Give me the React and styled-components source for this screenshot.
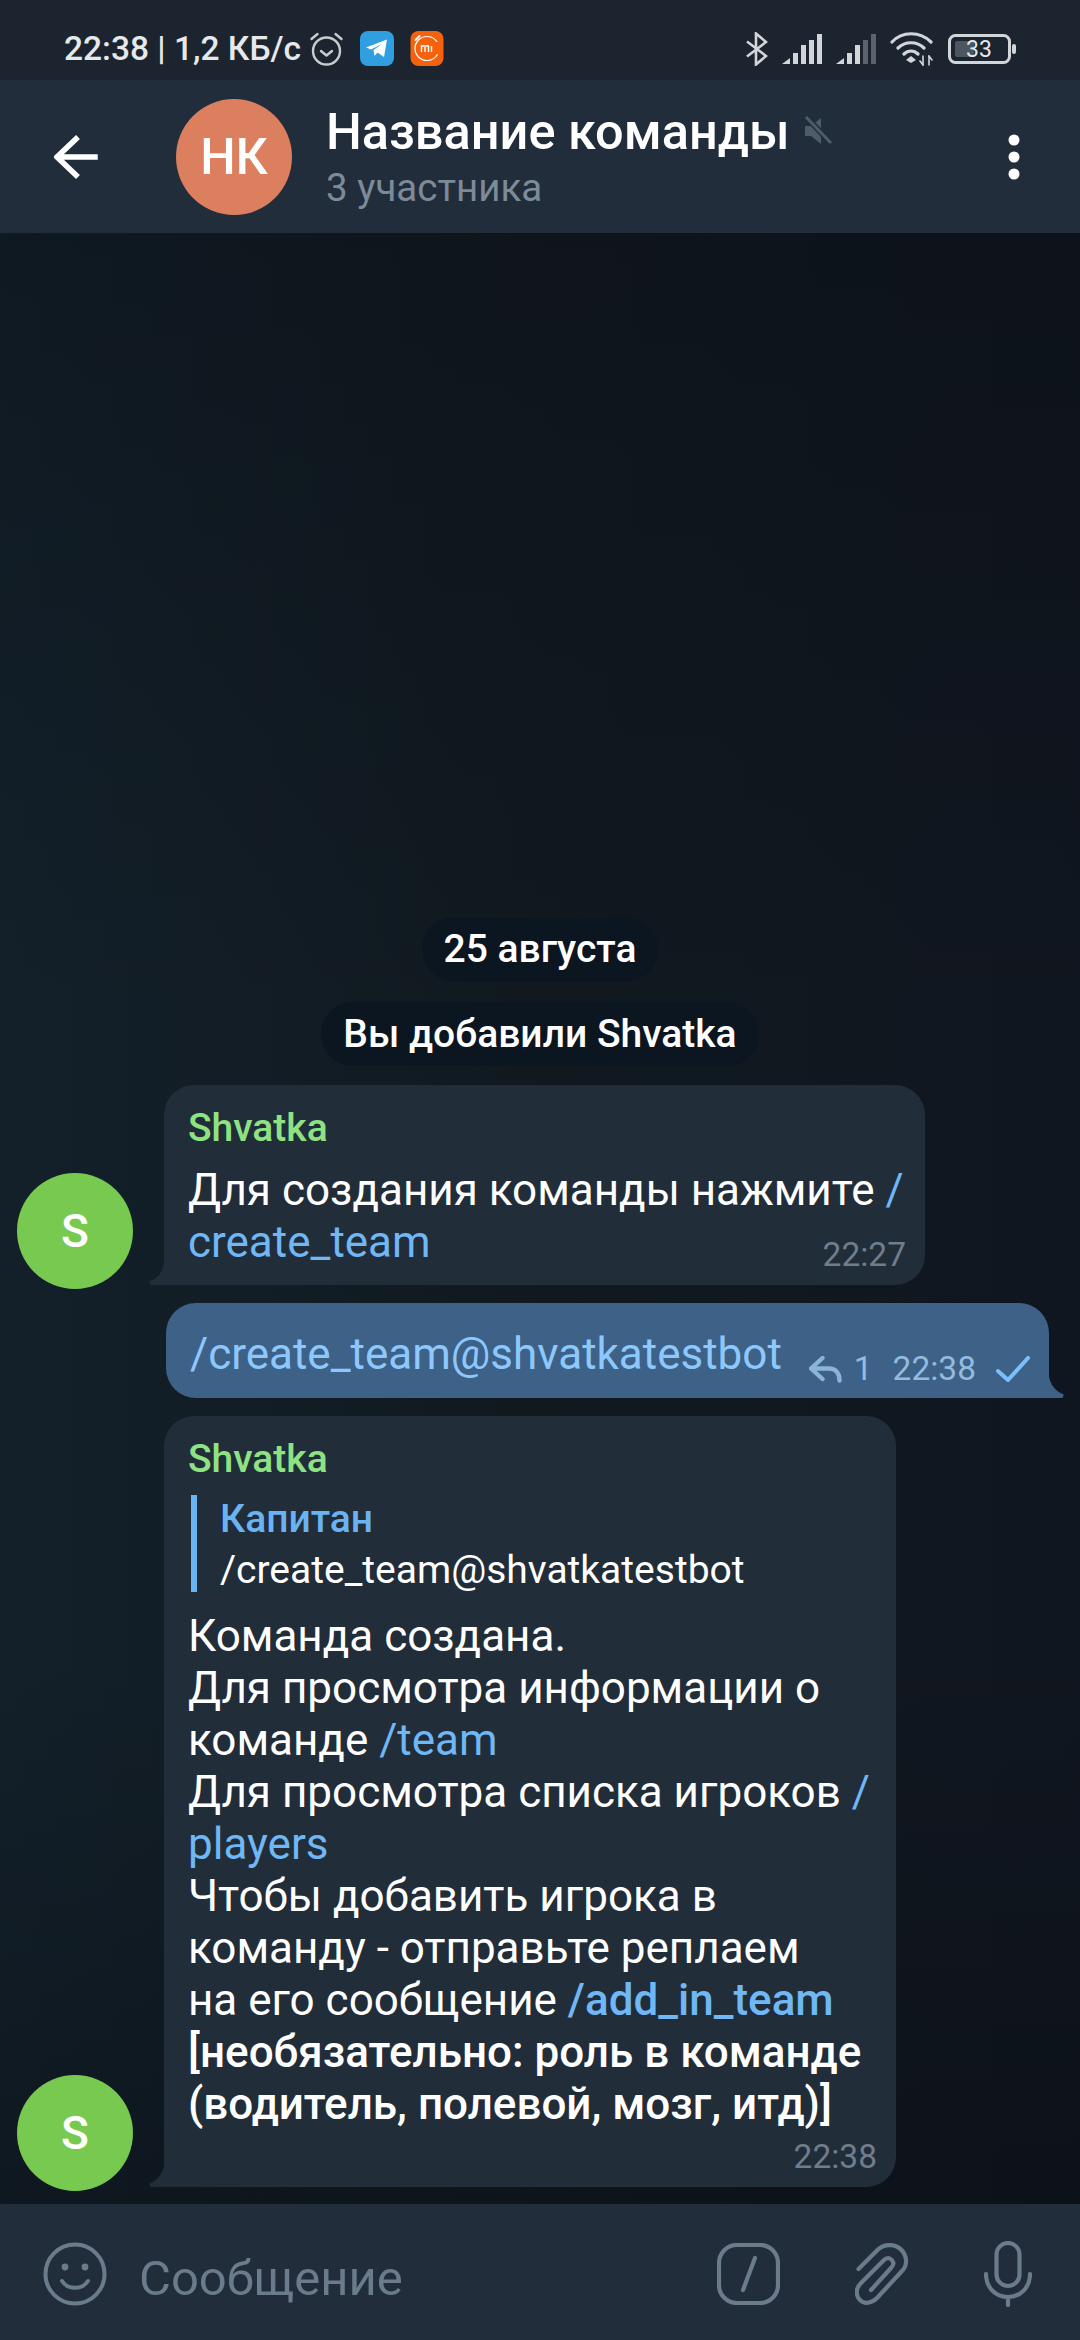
import React from 'react';
import styled, { createGlobalStyle } from 'styled-components';

const Global = createGlobalStyle`
  html, body {
    margin: 0;
    padding: 0;
    background: #0f1822;
  }
  * {
    box-sizing: border-box;
  }
`;

const Page = styled.div`
  width: 1080px;
  height: 2340px;
  display: flex;
  flex-direction: column;
  overflow: hidden;
  font-family: Roboto, 'Liberation Sans', sans-serif;
  color: #fff;
`;

const StatusBar = styled.div`
  height: 80px;
  flex: none;
  display: flex;
  align-items: center;
  justify-content: space-between;
  padding: 17px 64px 0 64px;
  background: #1b242f;
`;

const StatusGroup = styled.div`
  display: flex;
  align-items: center;
  gap: ${p => p.$gap || 16}px;
`;

const StatusText = styled.span`
  font-size: 33.5px;
  font-weight: 500;
  color: #e6e8ea;
  white-space: nowrap;
  margin-right: -8px;
`;

const Header = styled.header`
  height: 153px;
  flex: none;
  display: flex;
  align-items: center;
  padding: 0 60px 0 54px;
  background: #212d3b;
`;

const Avatar = styled.div`
  flex: none;
  width: ${p => p.$size}px;
  height: ${p => p.$size}px;
  border-radius: 50%;
  display: flex;
  align-items: center;
  justify-content: center;
  font-weight: 500;
  font-size: ${p => p.$font}px;
  color: #fff;
  background: ${p => p.$color};
`;

const HeaderAvatar = styled(Avatar)`
  margin-left: 78px;
`;

const TitleBlock = styled.div`
  margin-left: 34px;
  flex: 1;
  display: flex;
  flex-direction: column;
  gap: 4px;
`;

const TitleRow = styled.div`
  display: flex;
  align-items: flex-start;
  gap: 14px;
`;

const Title = styled.div`
  font-size: 50.5px;
  font-weight: 500;
  line-height: 58px;
`;

const Subtitle = styled.div`
  font-size: 38.5px;
  line-height: 46px;
  color: #7d8b99;
`;

const MuteSvg = styled.svg`
  margin-top: 13px;
`;

const Chat = styled.main`
  flex: 1;
  display: flex;
  flex-direction: column;
  justify-content: flex-end;
  padding: 0 0 17px;
  background:
    linear-gradient(180deg, rgba(8, 12, 18, 0.35) 0%, rgba(8, 12, 18, 0) 40%, rgba(8, 12, 18, 0) 72%, rgba(8, 12, 18, 0.4) 100%),
    linear-gradient(90deg, #13202a 0%, #11191f 50%, #10161f 100%);
`;

const ServiceChip = styled.div`
  align-self: center;
  height: 64px;
  display: flex;
  align-items: center;
  padding: 0 22px;
  margin-bottom: ${p => p.$after}px;
  border-radius: 32px;
  font-size: 39px;
  font-weight: 500;
  background: #0c1620;
  color: #fff;
`;

const Row = styled.div`
  display: flex;
  align-items: flex-end;
  margin-bottom: ${p => p.$after || 0}px;
`;

const RowAvatar = styled(Avatar)`
  margin: 0 31px -4px 17px;
`;

const Bubble = styled.div`
  position: relative;
  width: ${p => p.$width}px;
  padding: 21px 24px ${p => p.$bottom}px;
  border-radius: 30px 30px 30px 0;
  background: #222d3a;
  font-size: 44px;
  line-height: 52px;
  white-space: nowrap;
`;

const OutRow = styled.div`
  display: flex;
  justify-content: flex-end;
  padding-right: 31px;
  margin-bottom: 18px;
`;

const OutBubble = styled.div`
  position: relative;
  width: 883px;
  height: 95px;
  display: flex;
  justify-content: space-between;
  padding: 25px 19px 0 24px;
  border-radius: 30px 30px 0 30px;
  background: #3e6188;
  font-size: 44px;
  line-height: 52px;
  white-space: nowrap;
`;

const Tail = styled.svg`
  position: absolute;
  bottom: 0;
  width: 16px;
  height: 30px;
  ${p => (p.$side === 'right' ? 'right: -15px;' : 'left: -15px;')}
  fill: ${p => p.$color};
`;

const Sender = styled.div`
  color: #8fe282;
  font-size: 39px;
  font-weight: 500;
  line-height: 44px;
  margin-bottom: 14px;
`;

const Command = styled.span`
  color: ${p => (p.$out ? '#8dc8fd' : '#6fb7f5')};
  font-weight: ${p => (p.$bold ? 500 : 400)};
`;

const Strong = styled.div`
  font-weight: 500;
`;

const Time = styled.span`
  position: absolute;
  right: 19px;
  bottom: 10px;
  font-size: 33.5px;
  line-height: 40px;
  color: #6f7e8d;
`;

const OutMeta = styled.div`
  display: flex;
  align-items: center;
  align-self: flex-start;
  gap: 20px;
  margin-top: 21px;
  font-size: 33.5px;
  line-height: 40px;
  color: #92bbde;
`;

const ReplyCount = styled.span`
  display: flex;
  align-items: center;
  gap: 12px;
`;

const Reply = styled.div`
  border-left: 6px solid #6ab3f3;
  padding-left: 23px;
  margin: 0 0 18px 3px;
  font-size: 39px;
`;

const ReplyName = styled.div`
  color: #6ab3f3;
  font-weight: 500;
  line-height: 48px;
  margin-bottom: 5px;
`;

const ReplyText = styled.div`
  line-height: 44px;
`;

const Composer = styled.footer`
  height: 136px;
  flex: none;
  display: flex;
  align-items: center;
  padding: 4px 48px 0 43px;
  background: #212d3b;
`;

const Placeholder = styled.div`
  flex: 1;
  margin: 8px 0 0 32px;
  font-size: 49px;
  color: #6a7b8c;
`;

const ComposerIcons = styled.div`
  display: flex;
  align-items: center;
  gap: 75px;
`;

const AlarmIcon = () => (
  <svg width="35" height="36" viewBox="0 0 34 36" fill="none" stroke="#c9cccf" strokeWidth="2.4" strokeLinecap="round" strokeLinejoin="round">
    <circle cx="17" cy="20" r="13.5" />
    <path d="M11.5 20l5.5 4.5 5.5-4.5M2 8l6-5M32 8l-6-5" />
  </svg>
);

const TelegramIcon = () => (
  <svg width="34" height="35" viewBox="0 0 34 35">
    <rect width="34" height="35" rx="8" fill="#2f9fe0" />
    <path d="M6 16.5L27 8.5 24 26l-6.5-4.500-3 3.500-1-6L22 13 11 18.500z" fill="#fff" />
  </svg>
);

const MiIcon = () => (
  <svg width="34" height="35" viewBox="0 0 33 35">
    <rect width="33" height="35" rx="8" fill="#f5620e" />
    <circle cx="16.500" cy="17.500" r="12" fill="none" stroke="#fff" strokeWidth="1.200" strokeDasharray="62 14" strokeDashoffset="-6" />
    <path d="M5 9l4-4" stroke="#fff" strokeWidth="2" strokeLinecap="round" />
    <path d="M11 21v-6h7v6M14.500 16v5M21 15v6" fill="none" stroke="#fff" strokeWidth="1.400" />
  </svg>
);

const BluetoothIcon = () => (
  <svg width="22" height="34" viewBox="0 0 22 34" fill="none" stroke="#d3d6d9" strokeWidth="2.600">
    <path d="M1 9.500L20 24 10 32.500V1.500L20 10 1 24.500" />
  </svg>
);

const SignalIcon = ({ dim }) => (
  <svg width="40" height="30" viewBox="0 0 40 30">
    <path d="M0 30l8-6v6z" fill="#d3d6d9" />
    <rect x="11" y="19" width="5" height="11" fill="#d3d6d9" />
    <rect x="19" y="11" width="5" height="19" fill="#d3d6d9" />
    <rect x="27" y="6" width="5" height="24" fill={dim ? '#5b636c' : '#d3d6d9'} />
    <rect x="35" y="0" width="5" height="30" fill={dim ? '#5b636c' : '#d3d6d9'} />
  </svg>
);

const WifiIcon = () => (
  <svg width="44" height="34" viewBox="0 0 44 34" fill="none" stroke="#d3d6d9" strokeWidth="3.200" strokeLinecap="round">
    <path d="M2 10C12 -1 30 -1 41 10M8 16C15 9 27 9 34 16M14 22C18 18 24 18 28 22" />
    <path d="M21 24l5 4-5 3-5-3z" fill="#d3d6d9" stroke="none" />
    <path d="M33 24v9M39 24v9" strokeWidth="1.600" />
    <path d="M30 29l3 4M42 28l-3-4" strokeWidth="1.600" />
  </svg>
);

const BatteryIcon = () => (
  <svg width="68" height="30" viewBox="0 0 68 30">
    <rect x="1.500" y="1.500" width="60" height="27" rx="6" fill="none" stroke="#d3d6d9" strokeWidth="3" />
    <rect x="7" y="7" width="19" height="16" rx="2" fill="#4b5661" />
    <rect x="64" y="10" width="4" height="10" rx="2" fill="#d3d6d9" />
    <text x="31" y="23" textAnchor="middle" fontSize="23" fontFamily="Roboto, sans-serif" fill="#e6e8ea">33</text>
  </svg>
);

const BackIcon = () => (
  <svg width="44" height="44" viewBox="0 0 44 44" fill="none" stroke="#fff" strokeWidth="5.500" strokeLinecap="square">
    <path d="M41 22H5M22 4L3 22l19 18" />
  </svg>
);

const MuteIcon = () => (
  <MuteSvg width="28" height="30" viewBox="0 0 28 30">
    <path d="M1 10h6l10-8v26l-10-8H1z" fill="#4c5c6a" />
    <path d="M2 1l25 26" stroke="#212d3b" strokeWidth="6" />
    <path d="M2 1l25 26" stroke="#4c5c6a" strokeWidth="3" />
  </MuteSvg>
);

const DotsIcon = () => (
  <svg width="12" height="46" viewBox="0 0 12 46" fill="#fff">
    <circle cx="6" cy="6" r="5.500" />
    <circle cx="6" cy="23" r="5.500" />
    <circle cx="6" cy="40" r="5.500" />
  </svg>
);

const ReplyIcon = () => (
  <svg width="33" height="27" viewBox="0 0 33 27" fill="none" stroke="#8ab5d8" strokeWidth="4.400" strokeLinecap="round" strokeLinejoin="round">
    <path d="M13.500 2L2 12.500 13.500 23M3 12.500h17c6 0 10.500 4 10.500 12" />
  </svg>
);

const CheckIcon = () => (
  <svg width="34" height="26" viewBox="0 0 34 26" fill="none" stroke="#7cc0fb" strokeWidth="4" strokeLinecap="round" strokeLinejoin="round">
    <path d="M2 15l10 9L32 2" />
  </svg>
);

const SmileIcon = () => (
  <svg width="64" height="64" viewBox="0 0 64 64" fill="none" stroke="#6a7b8c" strokeWidth="4" strokeLinecap="round">
    <circle cx="32" cy="32" r="29.500" />
    <circle cx="22" cy="25" r="3.400" fill="#6a7b8c" stroke="none" />
    <circle cx="42" cy="25" r="3.400" fill="#6a7b8c" stroke="none" />
    <path d="M19 39c6 9 20 9 26 0" />
  </svg>
);

const SlashIcon = () => (
  <svg width="63" height="62" viewBox="0 0 63 62" fill="none" stroke="#6a7b8c" strokeWidth="4.200" strokeLinecap="round">
    <rect x="2" y="2" width="59" height="58" rx="18" />
    <path d="M38 15L26 47" />
  </svg>
);

const ClipIcon = () => (
  <svg width="54" height="62" viewBox="0 0 54 62" fill="none" stroke="#6a7b8c" strokeWidth="4.200" strokeLinecap="round" strokeLinejoin="round">
    <path d="M3.500 26L23 6.500C30 0 41 1 46.500 7C52 13 53 22 47 28L22 55C16 61 9 61 5 57C0 52 1 45 6 40L29 17C33 13 37 16 38 19C39 21 38 23 36 25L16 47" />
  </svg>
);

const MicIcon = () => (
  <svg width="48" height="66" viewBox="0 0 48 66" fill="none" stroke="#6a7b8c" strokeWidth="4.200" strokeLinecap="round">
    <rect x="12.500" y="2" width="23" height="43" rx="11.500" />
    <path d="M2 33c0 14 10 23 22 23s22-9 22-23M24 56v8" />
  </svg>
);

const BubbleTail = ({ side, color }) => (
  <Tail $side={side} $color={color} viewBox="0 0 16 30" preserveAspectRatio="none">
    {side === 'right'
      ? <path d="M0 0C0 12 5 23 15 26Q16.500 28 14 30H0z" />
      : <path d="M16 0C16 12 11 23 1 26Q-0.500 28 2 30H16z" />}
  </Tail>
);

const App = () => (
  <Page>
    <Global />
    <StatusBar>
      <StatusGroup>
        <StatusText>22:38 | 1,2 КБ/с</StatusText>
        <AlarmIcon />
        <TelegramIcon />
        <MiIcon />
      </StatusGroup>
      <StatusGroup $gap={14}>
        <BluetoothIcon />
        <SignalIcon />
        <SignalIcon dim />
        <WifiIcon />
        <BatteryIcon />
      </StatusGroup>
    </StatusBar>

    <Header>
      <BackIcon />
      <HeaderAvatar $size={116} $font={50} $color="#dc7f5e">НК</HeaderAvatar>
      <TitleBlock>
        <TitleRow>
          <Title>Название команды</Title>
          <MuteIcon />
        </TitleRow>
        <Subtitle>3 участника</Subtitle>
      </TitleBlock>
      <DotsIcon />
    </Header>

    <Chat>
      <ServiceChip $after={21}>25 августа</ServiceChip>
      <ServiceChip $after={19}>Вы добавили Shvatka</ServiceChip>

      <Row $after={18}>
        <RowAvatar $size={116} $font={46} $color="#78c94f">S</RowAvatar>
        <Bubble $width={761} $bottom={17}>
          <BubbleTail side="left" color="#222d3a" />
          <Sender>Shvatka</Sender>
          Для создания команды нажмите <Command>/</Command><br />
          <Command>create_team</Command>
          <Time>22:27</Time>
        </Bubble>
      </Row>

      <OutRow>
        <OutBubble>
          <BubbleTail side="right" color="#3e6188" />
          <Command $out>/create_team@shvatkatestbot</Command>
          <OutMeta>
            <ReplyCount>
              <ReplyIcon />
              1
            </ReplyCount>
            22:38
            <CheckIcon />
          </OutMeta>
        </OutBubble>
      </OutRow>

      <Row>
        <RowAvatar $size={116} $font={46} $color="#78c94f">S</RowAvatar>
        <Bubble $width={732} $bottom={57}>
          <BubbleTail side="left" color="#222d3a" />
          <Sender>Shvatka</Sender>
          <Reply>
            <ReplyName>Капитан</ReplyName>
            <ReplyText>/create_team@shvatkatestbot</ReplyText>
          </Reply>
          Команда создана.<br />
          Для просмотра информации о<br />
          команде <Command>/team</Command><br />
          Для просмотра списка игроков <Command>/</Command><br />
          <Command>players</Command><br />
          Чтобы добавить игрока в<br />
          команду - отправьте реплаем<br />
          на его сообщение <Command $bold>/add_in_team</Command>
          <Strong>[необязательно: роль в команде<br />(водитель, полевой, мозг, итд)]</Strong>
          <Time>22:38</Time>
        </Bubble>
      </Row>
    </Chat>

    <Composer>
      <SmileIcon />
      <Placeholder>Сообщение</Placeholder>
      <ComposerIcons>
        <SlashIcon />
        <ClipIcon />
        <MicIcon />
      </ComposerIcons>
    </Composer>
  </Page>
);

export default App;
